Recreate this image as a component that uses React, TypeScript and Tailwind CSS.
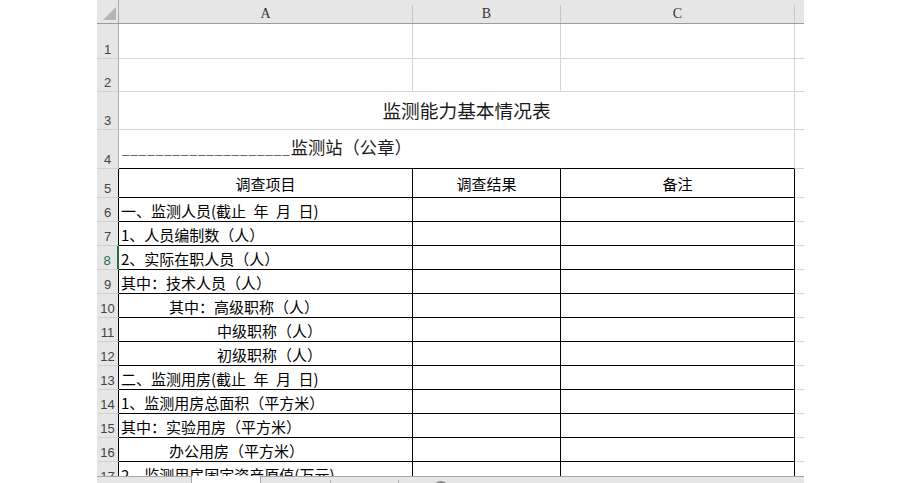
import type { ReactNode } from "react";

const CJK = "font-['SimSun','Noto_Sans_CJK_SC',sans-serif]";

type BodyRow = { n: number; text: string; indent: string };

// spaces are en-spaces so they take the half-width of the original sheet font
const bodyRows: BodyRow[] = [
  { n: 6, text: "一、监测人员(截止\u2002年\u2002月\u2002日)", indent: "pl-[2px]" },
  { n: 7, text: "1、人员编制数（人）", indent: "pl-[2px]" },
  { n: 8, text: "2、实际在职人员（人）", indent: "pl-[2px]" },
  { n: 9, text: "其中：技术人员（人）", indent: "pl-[2px]" },
  { n: 10, text: "其中：高级职称（人）", indent: "pl-[50px]" },
  { n: 11, text: "中级职称（人）", indent: "pl-[98px]" },
  { n: 12, text: "初级职称（人）", indent: "pl-[98px]" },
  { n: 13, text: "二、监测用房(截止\u2002年\u2002月\u2002日)", indent: "pl-[2px]" },
  { n: 14, text: "1、监测用房总面积（平方米）", indent: "pl-[2px]" },
  { n: 15, text: "其中：实验用房（平方米）", indent: "pl-[2px]" },
  { n: 16, text: "办公用房（平方米）", indent: "pl-[50px]" },
  { n: 17, text: "2、监测用房固定资产原值(万元)", indent: "pl-[2px]" },
];

function RowNum({ n, edge = "gray" }: { n: number; edge?: "gray" | "black" | "green" }) {
  const edgeCls =
    edge === "green"
      ? "border-r-2 border-r-[#217346] text-[#217346]"
      : edge === "black"
        ? "border-r border-r-black text-[#444]"
        : "border-r border-r-[#ababab] text-[#444]";
  return (
    <div
      className={`flex w-[22px] shrink-0 items-end justify-center border-b border-b-[#d0d0d0] bg-[#e6e6e6] pb-[2px] font-['Liberation_Sans',sans-serif] text-[13px] leading-none ${edgeCls}`}
    >
      {n}
    </div>
  );
}

function GridRow({ h, children }: { h: string; children: ReactNode }) {
  return <div className={`flex shrink-0 ${h}`}>{children}</div>;
}

function EdgeD() {
  return <div className="w-[9px] shrink-0 border-b border-[#d4d4d4]" />;
}

export default function App() {
  return (
    <div className="h-[483px] w-[900px] overflow-hidden bg-white">
      <div className="ml-[97px] flex h-full w-[707px] flex-col">
        {/* column headers */}
        <div className="flex h-[24px] shrink-0 border-b border-[#9b9b9b] bg-[#e6e6e6] font-['Liberation_Serif',serif] text-[14px] leading-none text-[#333]">
          <div className="flex w-[22px] shrink-0 items-end justify-end border-r border-[#ababab] pb-[3px] pr-[2px]">
            <svg width="13" height="13" viewBox="0 0 13 13">
              <polygon points="13,0 13,13 0,13" fill="#b4b4b4" />
            </svg>
          </div>
          <div className="mt-[5px] flex w-[294px] shrink-0 items-center justify-center border-r border-[#c6c6c6]">A</div>
          <div className="mt-[5px] flex w-[148px] shrink-0 items-center justify-center border-r border-[#c6c6c6]">B</div>
          <div className="mt-[5px] flex w-[234px] shrink-0 items-center justify-center border-r border-[#c6c6c6]">C</div>
          <div className="w-[9px] shrink-0" />
        </div>

        {/* sheet body */}
        <div className={`flex h-[452px] shrink-0 flex-col overflow-hidden text-black ${CJK}`}>
          <GridRow h="h-[35px]">
            <RowNum n={1} />
            <div className="w-[294px] shrink-0 border-b border-r border-[#d4d4d4]" />
            <div className="w-[148px] shrink-0 border-b border-r border-[#d4d4d4]" />
            <div className="w-[234px] shrink-0 border-b border-r border-[#d4d4d4]" />
            <EdgeD />
          </GridRow>
          <GridRow h="h-[33px]">
            <RowNum n={2} />
            <div className="w-[294px] shrink-0 border-b border-r border-[#d4d4d4]" />
            <div className="w-[148px] shrink-0 border-b border-r border-[#d4d4d4]" />
            <div className="w-[234px] shrink-0 border-b border-r border-[#d4d4d4]" />
            <EdgeD />
          </GridRow>
          <GridRow h="h-[38px]">
            <RowNum n={3} />
            <div className="flex w-[676px] shrink-0 items-center justify-center border-b border-r border-[#d4d4d4] pl-[20px] text-[18.7px] leading-none text-[#1a1a1a]">
              监测能力基本情况表
            </div>
            <EdgeD />
          </GridRow>
          <GridRow h="h-[39px]">
            <RowNum n={4} />
            <div className="flex w-[676px] shrink-0 items-center border-b border-r border-b-black border-r-[#d4d4d4] pb-[3px] pl-[3px] text-[17.3px] leading-none text-[#1a1a1a]">
              <span className="whitespace-nowrap">
                <span className="font-['Liberation_Mono',monospace] text-[12.4px] tracking-[1px]">____________________</span>
                监测站（公章）
              </span>
            </div>
            <EdgeD />
          </GridRow>
          <GridRow h="h-[29px]">
            <RowNum n={5} edge="black" />
            <div className="flex w-[294px] shrink-0 items-center justify-center border-b border-r border-black pt-[1px] text-[15px] leading-none">
              调查项目
            </div>
            <div className="flex w-[148px] shrink-0 items-center justify-center border-b border-r border-black pt-[1px] text-[15px] leading-none">
              调查结果
            </div>
            <div className="flex w-[234px] shrink-0 items-center justify-center border-b border-r border-black pt-[1px] text-[15px] leading-none">
              备注
            </div>
            <EdgeD />
          </GridRow>
          {bodyRows.map((r) => (
            <GridRow key={r.n} h="h-[24px]">
              <RowNum n={r.n} edge={r.n === 8 ? "green" : "black"} />
              <div
                className={`flex w-[294px] shrink-0 items-center whitespace-nowrap border-b border-r border-black pt-[1px] text-[15px] leading-none ${r.indent}`}
              >
                {r.text}
              </div>
              <div className="w-[148px] shrink-0 border-b border-r border-black" />
              <div className="w-[234px] shrink-0 border-b border-r border-black" />
              <EdgeD />
            </GridRow>
          ))}
        </div>

        {/* sheet tab strip, mostly out of view */}
        <div className="flex h-[7px] shrink-0 bg-[#e6e6e6]">
          <div className="w-[94px] shrink-0 border-t border-[#a6a6a6]" />
          <div className="w-[70px] shrink-0 border-x border-[#a6a6a6] bg-white" />
          <div className="w-[69px] shrink-0 border-t border-[#a6a6a6]" />
          <div className="flex w-[68px] shrink-0 border-t border-[#a6a6a6]">
            <div className="mt-[3px] h-full border-l border-[#b0b0b0]" />
          </div>
          <div className="relative flex-1 border-t border-[#a6a6a6]">
            <div className="absolute left-0 top-[3px] h-full border-l border-[#b0b0b0]" />
            <div className="absolute left-[35px] top-[4px] h-[16px] w-[16px] rounded-full border-2 border-[#8a8a8a]" />
          </div>
        </div>
      </div>
    </div>
  );
}
